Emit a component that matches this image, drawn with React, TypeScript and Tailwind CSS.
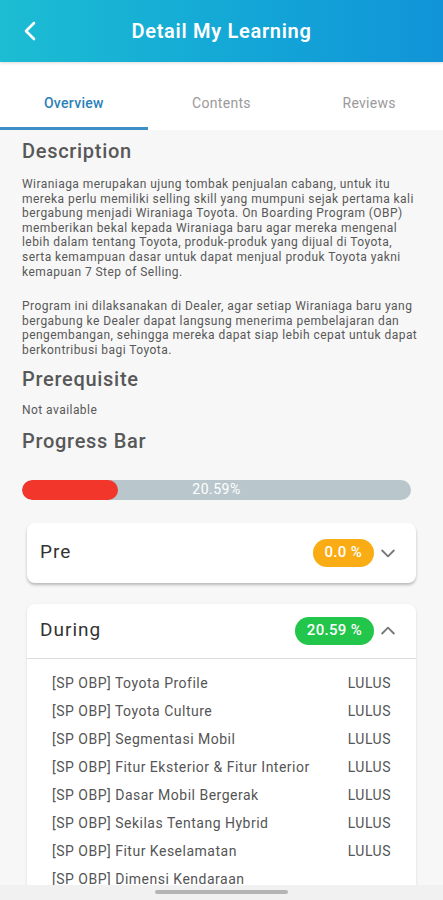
import React from 'react';

const descOne = [
  'Wiraniaga merupakan ujung tombak penjualan cabang, untuk itu',
  'mereka perlu memiliki selling skill yang mumpuni sejak pertama kali',
  'bergabung menjadi Wiraniaga Toyota. On Boarding Program (OBP)',
  'memberikan bekal kepada Wiraniaga baru agar mereka mengenal',
  'lebih dalam tentang Toyota, produk-produk yang dijual di Toyota,',
  'serta kemampuan dasar untuk dapat menjual produk Toyota yakni',
  'kemapuan 7 Step of Selling.',
];

const descTwo = [
  'Program ini dilaksanakan di Dealer, agar setiap Wiraniaga baru yang',
  'bergabung ke Dealer dapat langsung menerima pembelajaran dan',
  'pengembangan, sehingga mereka dapat siap lebih cepat untuk dapat',
  'berkontribusi bagi Toyota.',
];

const modules = [
  { name: '[SP OBP] Toyota Profile', status: 'LULUS' },
  { name: '[SP OBP] Toyota Culture', status: 'LULUS' },
  { name: '[SP OBP] Segmentasi Mobil', status: 'LULUS' },
  { name: '[SP OBP] Fitur Eksterior & Fitur Interior', status: 'LULUS' },
  { name: '[SP OBP] Dasar Mobil Bergerak', status: 'LULUS' },
  { name: '[SP OBP] Sekilas Tentang Hybrid', status: 'LULUS' },
  { name: '[SP OBP] Fitur Keselamatan', status: 'LULUS' },
  { name: '[SP OBP] Dimensi Kendaraan', status: '' },
];

const Chevron = ({ up }: { up?: boolean }) => (
  <svg width="20" height="20" viewBox="0 0 24 24" fill="none" stroke="#777" strokeWidth="2.2" strokeLinecap="round" strokeLinejoin="round">
    {up ? <path d="M5 15l7-7 7 7" /> : <path d="M5 9l7 7 7-7" />}
  </svg>
);

const Badge = ({ label, color }: { label: string; color: string }) => (
  <span className={`h-[28px] px-[12px] rounded-full flex items-center text-white text-[15px] font-medium tracking-[0.3px] ${color}`}>
    {label}
  </span>
);

const Tab = ({ label, active }: { label: string; active?: boolean }) => (
  <div className="flex-1 flex flex-col">
    <div
      className={`flex-1 flex items-center justify-center pt-[17px] text-[14px] tracking-[0.3px] ${
        active ? 'font-medium text-[#2b7fb8]' : 'text-[#9a9a9a]'
      }`}
    >
      {label}
    </div>
    <div className={`h-[3px] ${active ? 'bg-[#3b8fc6]' : 'bg-transparent'}`} />
  </div>
);

export default function App() {
  return (
    <div className="h-[900px] w-[443px] flex flex-col overflow-hidden bg-[#f7f7f7] font-['Roboto',sans-serif]">
      {/* header */}
      <div className="h-[62px] shrink-0 flex items-center bg-gradient-to-r from-[#1dbdd3] to-[#1194d8] relative shadow-[0_1px_3px_rgba(0,0,0,0.15)]">
        <svg className="absolute left-[21px] top-[20px]" width="20" height="22" viewBox="0 0 20 22" fill="none" stroke="white" strokeWidth="2.6" strokeLinecap="round" strokeLinejoin="round">
          <path d="M13 3L5 11l8 8" />
        </svg>
        <h1 className="w-full text-center text-white text-[20px] font-semibold tracking-[0.7px]">Detail My Learning</h1>
      </div>

      {/* tabs */}
      <div className="h-[68px] shrink-0 bg-white flex">
        <Tab label="Overview" active />
        <Tab label="Contents" />
        <Tab label="Reviews" />
      </div>

      {/* content */}
      <div className="flex-1 overflow-hidden px-[22px] pt-[9px] text-[#585858]">
        <h2 className="text-[20px] font-medium leading-[24px] tracking-[0.7px]">Description</h2>
        <div className="mt-[14px] text-[12px] leading-[14.6px] tracking-[0.45px]">
          {descOne.map((l) => (
            <div key={l} className="whitespace-nowrap">{l}</div>
          ))}
          <div className="h-[20px]" />
          {descTwo.map((l) => (
            <div key={l} className="whitespace-nowrap">{l}</div>
          ))}
        </div>
        <h2 className="mt-[9px] text-[20px] font-medium leading-[24px] tracking-[0.7px]">Prerequisite</h2>
        <p className="mt-[12px] text-[12px] leading-[14px] tracking-[0.45px]">Not available</p>
        <h2 className="mt-[12px] text-[20px] font-medium leading-[24px] tracking-[0.7px]">Progress Bar</h2>

        <div className="mt-[27px] mr-[10px] h-[20px] rounded-full bg-[#b9c7cc] relative overflow-hidden">
          <div className="h-full w-[96px] rounded-full bg-[#f2362b]" />
          <span className="absolute inset-0 flex items-center justify-center text-white text-[14px] tracking-[0.5px]">20.59%</span>
        </div>

        {/* pre card */}
        <div className="mt-[23px] mx-[5px] bg-white rounded-[8px] shadow-[0_2px_3px_rgba(0,0,0,0.25)] h-[60px] flex items-center pl-[13px] pr-[18px]">
          <span className="flex-1 text-[19px] tracking-[1px] text-[#333]">Pre</span>
          <Badge label="0.0 %" color="bg-[#f9ac13]" />
          <span className="ml-[4px]"><Chevron /></span>
        </div>

        {/* during card */}
        <div className="mt-[21px] mx-[5px] bg-white rounded-t-[8px] shadow-[0_1px_3px_rgba(0,0,0,0.12)]">
          <div className="h-[55px] flex items-center pl-[13px] pr-[18px] border-b border-[#dcdcdc]">
            <span className="flex-1 text-[19px] tracking-[1px] text-[#333]">During</span>
            <Badge label="20.59 %" color="bg-[#22c64a]" />
            <span className="ml-[4px]"><Chevron up /></span>
          </div>
          <div className="pt-[11px] pl-[25px] pr-[25px]">
            {modules.map((m) => (
              <div key={m.name} className="h-[28px] flex items-center justify-between text-[14px] tracking-[0.5px] text-[#555]">
                <span>{m.name}</span>
                <span>{m.status}</span>
              </div>
            ))}
          </div>
        </div>
      </div>

      {/* system nav */}
      <div className="h-[15px] shrink-0 bg-[#f1f1f1] flex justify-center pt-[5px]">
        <div className="w-[133px] h-[4px] rounded-full bg-[#b4b4b4]" />
      </div>
    </div>
  );
}
